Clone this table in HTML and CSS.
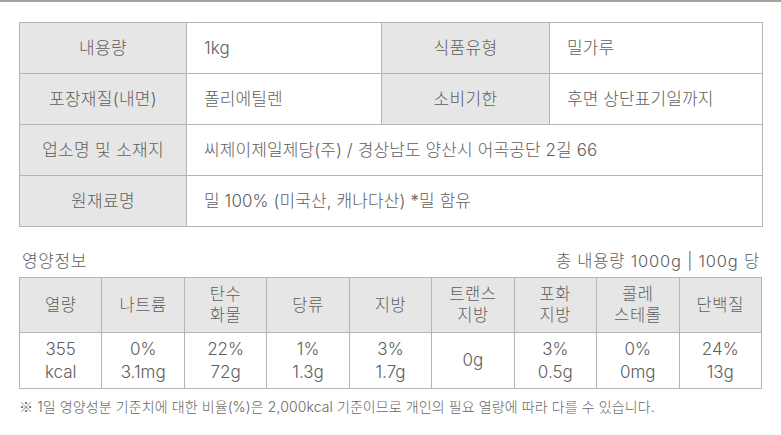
FILE: index.html
```html
<!DOCTYPE html>
<html lang="ko">
<head>
<meta charset="utf-8">
<link rel="stylesheet" href="styles.css">
</head>
<body>
<div class="topline"></div>
<div class="wrap">
  <table class="spec">
    <colgroup><col class="c1"><col class="c2"><col class="c3"><col class="c4"></colgroup>
    <tr><th>내용량</th><td>1kg</td><th>식품유형</th><td>밀가루</td></tr>
    <tr><th>포장재질(내면)</th><td>폴리에틸렌</td><th>소비기한</th><td>후면 상단표기일까지</td></tr>
    <tr><th>업소명 및 소재지</th><td colspan="3">씨제이제일제당(주) / 경상남도 양산시 어곡공단 2길 66</td></tr>
    <tr><th>원재료명</th><td colspan="3">밀 100% (미국산, 캐나다산) *밀 함유</td></tr>
  </table>

  <div class="nutri-head">
    <span class="title">영양정보</span>
    <span class="basis">총 내용량 1000g | 100g 당</span>
  </div>
  <table class="nutri">
    <tr class="hrow">
      <th>열량</th><th>나트륨</th><th>탄수<br>화물</th><th>당류</th><th>지방</th><th>트랜스<br>지방</th><th>포화<br>지방</th><th>콜레<br>스테롤</th><th>단백질</th>
    </tr>
    <tr class="drow">
      <td>355<br>kcal</td><td>0%<br>3.1mg</td><td>22%<br>72g</td><td>1%<br>1.3g</td><td>3%<br>1.7g</td><td>0g</td><td>3%<br>0.5g</td><td>0%<br>0mg</td><td>24%<br>13g</td>
    </tr>
  </table>
  <p class="note"><span class="mark">※</span> 1일 영양성분 기준치에 대한 비율(%)은 2,000kcal 기준이므로 개인의 필요 열량에 따라 다를 수 있습니다.</p>
</div>
</body>
</html>
```
FILE: styles.css
```css
html, body {
  margin: 0;
  padding: 0;
  background: #ffffff;
}
body {
  font-family: "Inter", "Noto Sans CJK KR", "Noto Sans", sans-serif;
  font-weight: 300;
  color: #5e5e5e;
  width: 781px;
  height: 435px;
  overflow: hidden;
}
.topline {
  height: 2px;
  background: #aaa298;
}
.wrap {
  padding: 20px 20px 0 19px;
}
table {
  border-collapse: collapse;
  table-layout: fixed;
  width: 743px;
}
.spec .c1 { width: 167px; }
.spec .c2 { width: 195px; }
.spec .c3 { width: 168px; }
.spec .c4 { width: 213px; }
.spec th, .spec td {
  border: 1px solid #b5b5b5;
  height: 51px;
  padding: 0;
  font-size: 17px;
  font-weight: 300;
  line-height: 22px;
  box-sizing: border-box;
}
.spec th {
  background: #e6e6e6;
  text-align: center;
  letter-spacing: 0.3px;
}
.spec td {
  background: #ffffff;
  text-align: left;
  padding-left: 17px;
  letter-spacing: 0.1px;
}
.nutri-head {
  display: flex;
  justify-content: space-between;
  align-items: flex-end;
  margin-top: 22px;
  height: 24px;
  padding: 0 1px 0 3px;
}
.nutri-head .title {
  font-size: 17px;
  line-height: 24px;
  letter-spacing: 0.6px;
}
.nutri-head .basis {
  font-size: 16.5px;
  line-height: 24px;
  letter-spacing: 0.8px;
}
.nutri {
  margin-top: 4px;
}
.nutri th, .nutri td {
  border: 1px solid #b5b5b5;
  padding: 0;
  text-align: center;
  font-weight: 300;
  box-sizing: border-box;
}
.nutri th {
  background: #e6e6e6;
  height: 55px;
  font-size: 16.5px;
  line-height: 21px;
  letter-spacing: 0.6px;
}
.nutri td {
  height: 56px;
  font-size: 17px;
  line-height: 23px;
}
.note {
  margin: 7px 0 0 0;
  font-size: 14px;
  line-height: 20px;
  color: #666666;
  letter-spacing: 0.1px;
}
.note .mark {
  font-family: "Noto Sans CJK KR", sans-serif;
}
```
